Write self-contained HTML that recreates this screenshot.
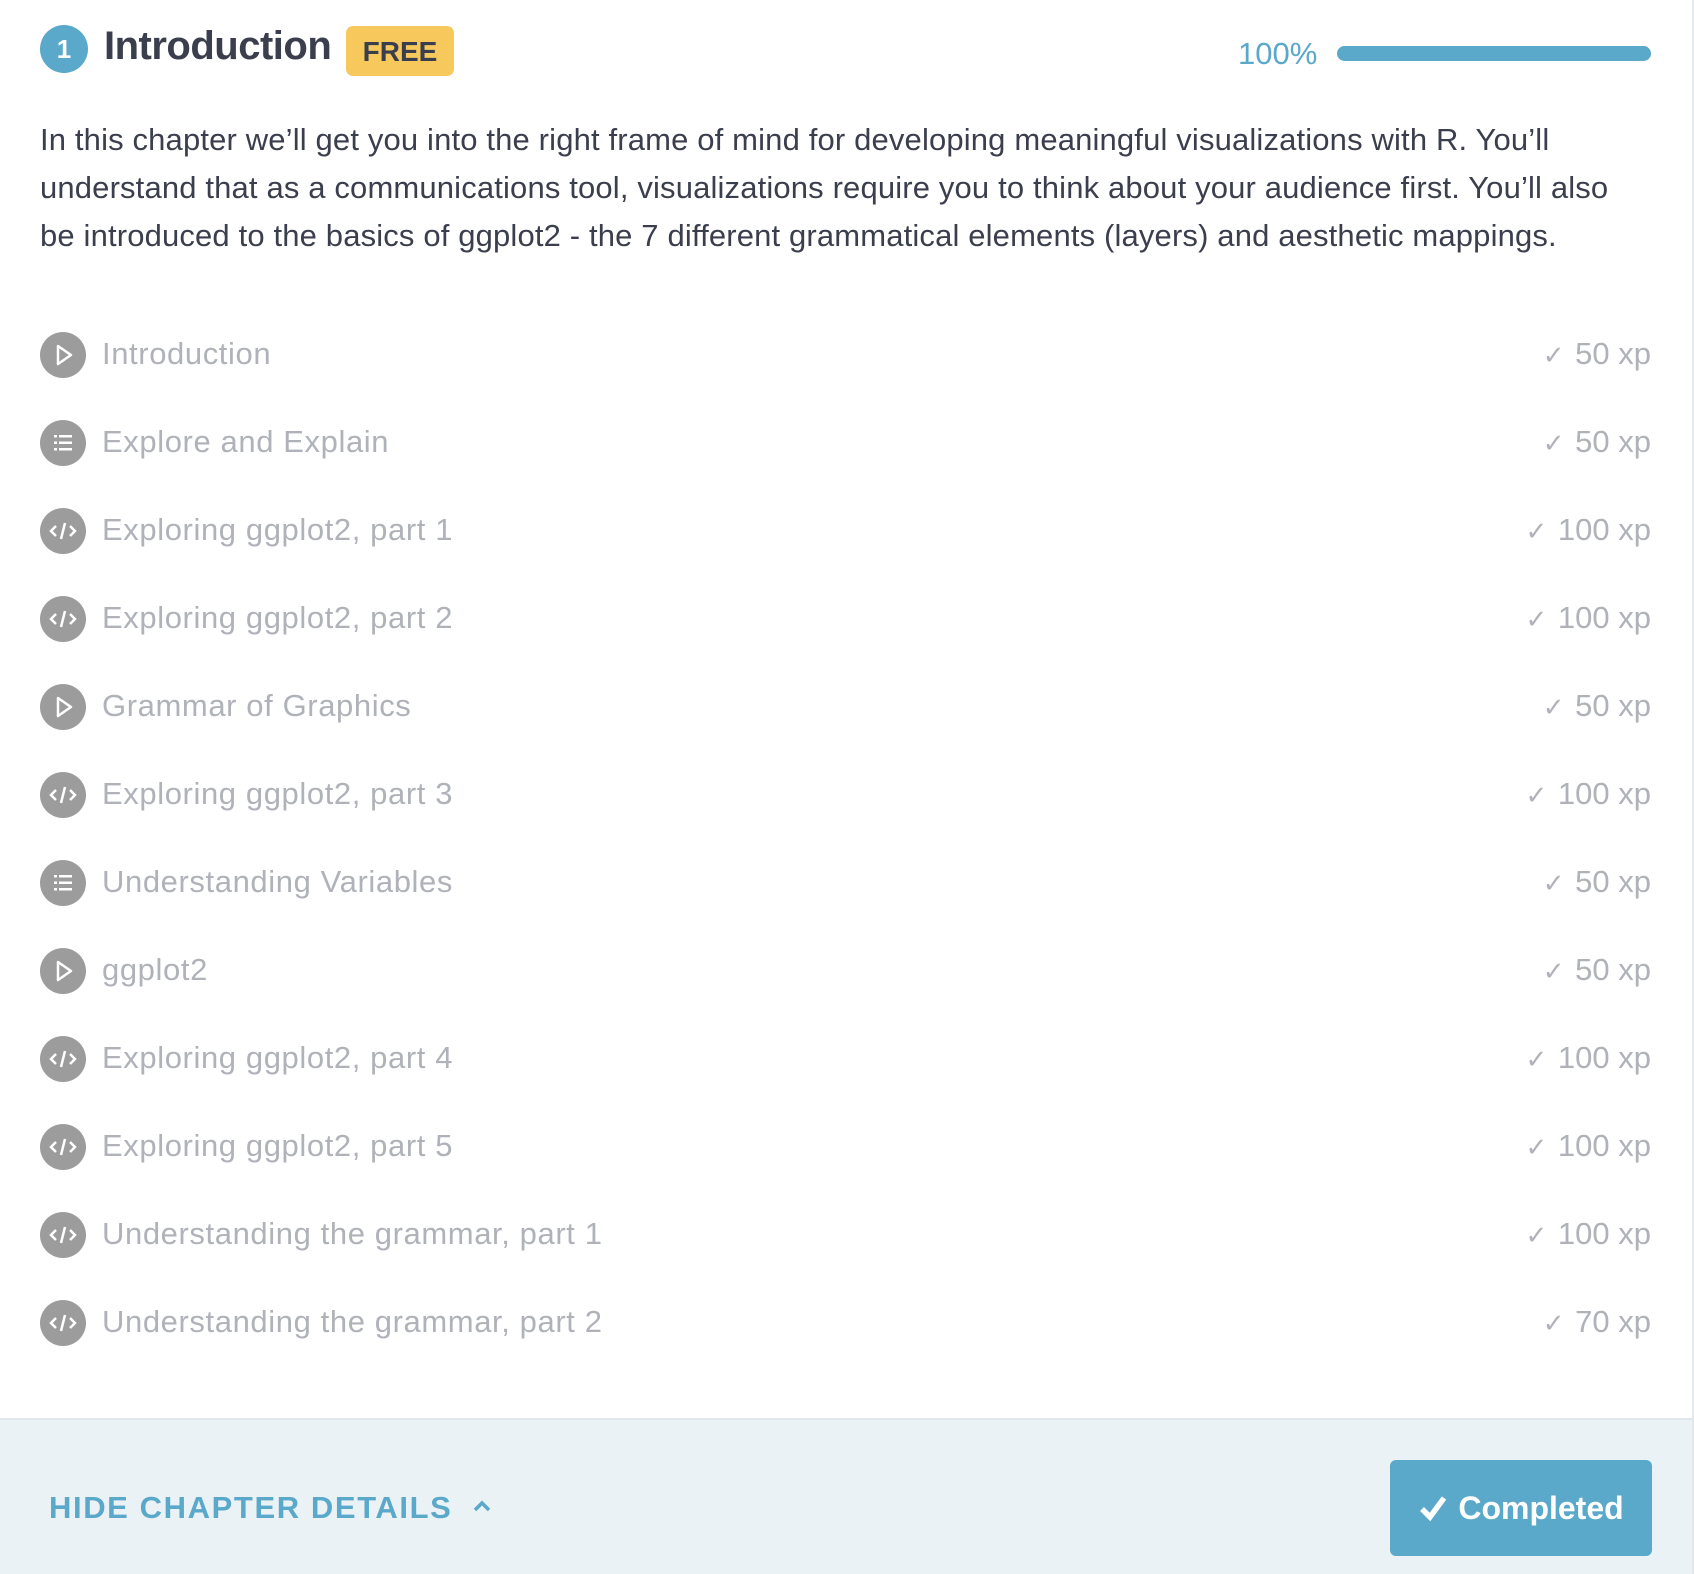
<!DOCTYPE html>
<html><head><meta charset="utf-8"><style>
*{margin:0;padding:0;box-sizing:border-box}
body{width:1694px;height:1574px;background:#fff;font-family:"Liberation Sans",sans-serif;position:relative;overflow:hidden;border-right:2px solid #e4e8ec}
.abs{position:absolute}
.num{left:40px;top:25px;width:48px;height:48px;border-radius:50%;background:#5aa8ca;color:#fff;font-size:26px;font-weight:bold;text-align:center;line-height:48px}
.title{left:104px;top:24px;font-size:40px;color:#3b3f4d;font-weight:bold;letter-spacing:-0.5px}
.free{left:346px;top:26px;width:108px;height:50px;border-radius:7px;background:#f7c95d;color:#3b3f4d;font-size:28px;font-weight:bold;text-align:center;line-height:52px}
.pct{left:1238px;top:36px;font-size:31px;color:#5aa8ca}
.bar{left:1337px;top:46px;width:314px;height:15px;border-radius:8px;background:#5aa8ca}
.desc{left:40px;top:116px;width:1650px;font-size:31px;letter-spacing:0.15px;line-height:48px;color:#3b3f4d;white-space:nowrap}
.row{left:40px;width:1611px;height:50px}
.ic{position:absolute;left:0;top:2px;width:46px;height:46px;border-radius:50%;background:#9c9c9c}
.ic svg{position:absolute;left:0;top:0}
.lbl{position:absolute;left:62px;top:6px;font-size:31px;letter-spacing:0.6px;color:#afb2b9}
.xp{position:absolute;right:0;top:6px;font-size:31px;color:#afb2b9}
.xp span{font-size:26px;margin-right:2px}
.foot{left:0;top:1418px;width:1692px;height:156px;background:#ebf2f6;border-top:2px solid #e1e8ec}
.hide{left:49px;top:1490px;font-size:31px;color:#5aa8ca;letter-spacing:1.6px;font-weight:bold}
.btn{left:1390px;top:1460px;width:262px;height:96px;border-radius:6px;background:#5aa8ca;color:#fff;font-size:32px;font-weight:bold;line-height:96px;text-align:center}
</style></head><body>
<div class="abs num">1</div>
<div class="abs title">Introduction</div>
<div class="abs free">FREE</div>
<div class="abs pct">100%</div>
<div class="abs bar"></div>
<div class="abs desc">In this chapter we’ll get you into the right frame of mind for developing meaningful visualizations with R. You’ll<br>understand that as a communications tool, visualizations require you to think about your audience first. You’ll also<br>be introduced to the basics of ggplot2 - the 7 different grammatical elements (layers) and aesthetic mappings.</div>
<div id="list"></div>
<div class="abs foot"></div>
<div class="abs hide">HIDE CHAPTER DETAILS <svg width="22" height="16" viewBox="0 0 22 16" style="margin-left:8px;vertical-align:4px"><path d="M4 12 L11 5 L18 12" stroke="#5aa8ca" stroke-width="3.5" fill="none"/></svg></div>
<div class="abs btn"><svg width="30" height="28" viewBox="0 0 30 28" style="vertical-align:-3px;margin-right:10px"><path d="M4 15 L12 23 L26 4" stroke="#fff" stroke-width="5.5" fill="none"/></svg>Completed</div>
<script>
var P='<svg width="46" height="46" viewBox="0 0 46 46"><path d="M18 14 L31 23 L18 32 Z" stroke="#fff" stroke-width="2.5" fill="none" stroke-linejoin="round"/></svg>';
var L='<svg width="46" height="46" viewBox="0 0 46 46"><g fill="#fff"><rect x="14" y="15" width="3" height="2.5"/><rect x="14" y="21.5" width="3" height="2.5"/><rect x="14" y="28" width="3" height="2.5"/><rect x="19" y="15" width="13" height="2.5"/><rect x="19" y="21.5" width="13" height="2.5"/><rect x="19" y="28" width="13" height="2.5"/></g></svg>';
var C='<svg width="46" height="46" viewBox="0 0 46 46"><g stroke="#fff" stroke-width="2.5" fill="none"><path d="M16 18 L11 23 L16 28"/><path d="M30 18 L35 23 L30 28"/><path d="M25 15 L21 31"/></g></svg>';
var items=[[P,"Introduction",50],[L,"Explore and Explain",50],[C,"Exploring ggplot2, part 1",100],[C,"Exploring ggplot2, part 2",100],[P,"Grammar of Graphics",50],[C,"Exploring ggplot2, part 3",100],[L,"Understanding Variables",50],[P,"ggplot2",50],[C,"Exploring ggplot2, part 4",100],[C,"Exploring ggplot2, part 5",100],[C,"Understanding the grammar, part 1",100],[C,"Understanding the grammar, part 2",70]];
var h='';items.forEach(function(it,i){var t=330+i*88;h+='<div class="abs row" style="top:'+t+'px"><div class="ic">'+it[0]+'</div><div class="lbl">'+it[1]+'</div><div class="xp"><span>✓</span> '+it[2]+' xp</div></div>';});
document.getElementById('list').innerHTML=h;
</script>
</body></html>
